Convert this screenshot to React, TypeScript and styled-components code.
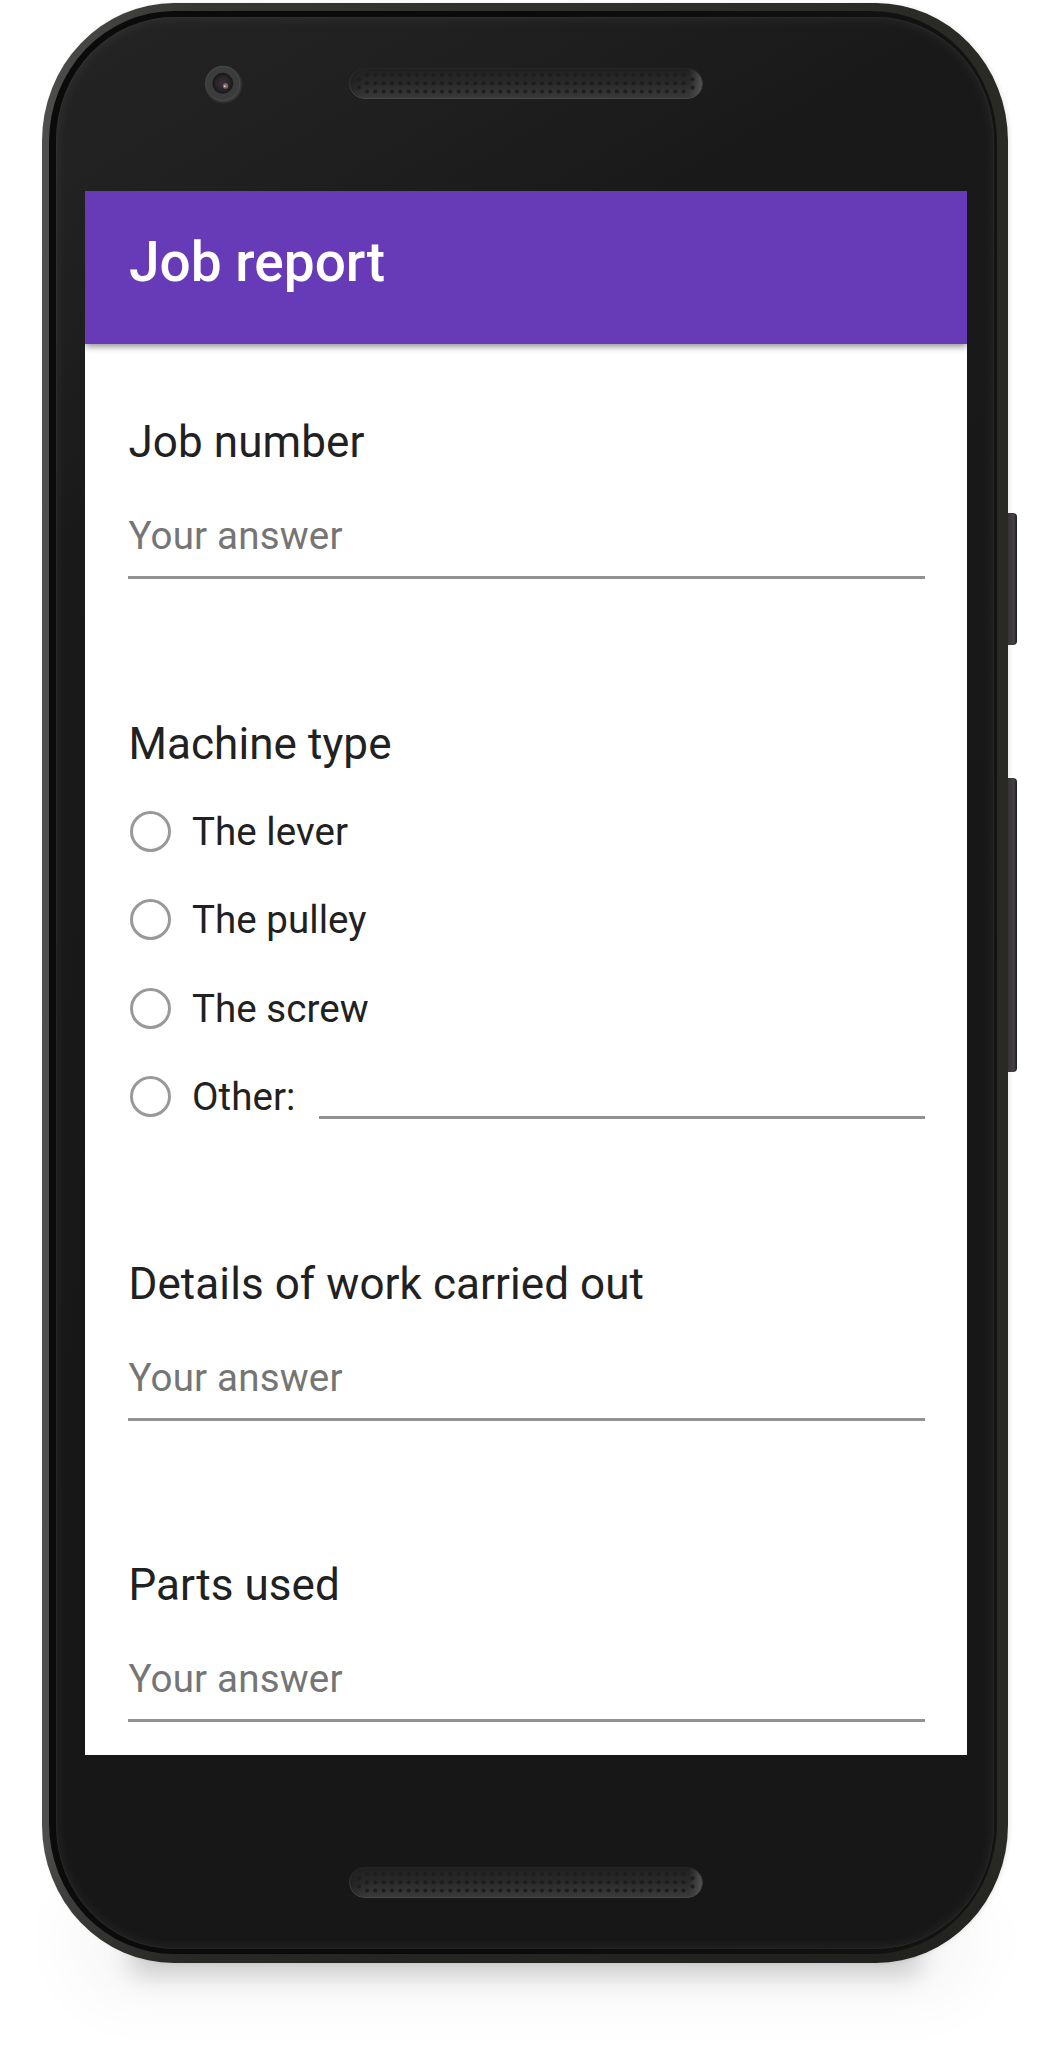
import React from "react";
import styled, { createGlobalStyle } from "styled-components";

const GlobalStyle = createGlobalStyle`
  * { box-sizing: border-box; }
  html, body { margin: 0; background: #fff; }
  body { font-family: Roboto, "Liberation Sans", sans-serif; color: #212121; }
`;

const Stage = styled.main`
  width: 1053px;
  height: 2061px;
  padding: 3px 0 0 42px;
  overflow: hidden;
  background: #fff;
`;

const Device = styled.div`
  position: relative;
  width: 966px;
  height: 1960px;
  &::before {
    content: "";
    position: absolute;
    left: 85px;
    right: 85px;
    bottom: -14px;
    height: 40px;
    border-radius: 30px;
    background: rgba(0, 0, 0, 0.17);
    filter: blur(12px);
  }
  &::after {
    content: "";
    position: absolute;
    left: 20px;
    right: 20px;
    bottom: -48px;
    height: 140px;
    border-radius: 80px;
    background: rgba(0, 0, 0, 0.025);
    filter: blur(22px);
  }
`;

const Frame = styled.div`
  position: relative;
  z-index: 1;
  width: 966px;
  height: 1960px;
  padding: 14px;
  border-radius: 132px / 138px;
  background:
    linear-gradient(180deg, transparent 94%, rgba(20, 20, 18, 0.45) 100%),
    linear-gradient(90deg, #4e4f4d 0, #464744 4%, #363733 16%, #2e2f2b 60%, #292a26 100%);
  box-shadow: 2px 0 4px rgba(0, 0, 0, 0.08);
  &::before {
    content: "";
    position: absolute;
    inset: 8px 11px 9px 7px;
    border-radius: 125px / 131px;
    background: linear-gradient(90deg, #0b0b0b 50%, #131312);
  }
`;

const Glass = styled.div`
  position: relative;
  display: flex;
  flex-direction: column;
  align-items: center;
  width: 938px;
  height: 1932px;
  padding-top: 51px;
  border-radius: 118px / 124px;
  background: linear-gradient(150deg, #242424 0, #202020 10%, #191919 22%, #171717 60%);
  box-shadow: inset 0 0 14px rgba(255, 255, 255, 0.08), inset 0 0 2px rgba(255, 255, 255, 0.12);
`;

const SideKey = styled.div<{ $top: number; $height: number }>`
  position: absolute;
  left: 966px;
  top: ${(p) => p.$top}px;
  width: 9px;
  height: ${(p) => p.$height}px;
  border-radius: 0 4px 4px 0;
  background: linear-gradient(90deg, #3a373a, #454145 65%, #1e1b1e);
`;

const SensorRow = styled.div`
  display: grid;
  grid-template-columns: 293px 354px 291px;
  grid-template-rows: 31px;
  align-items: center;
  width: 938px;
  height: 31px;
  margin-bottom: 92px;
`;

const BottomRow = styled(SensorRow)`
  margin: 112px 0 0;
`;

const SpeakerSvg = styled.svg`
  display: block;
  grid-column: 2;
`;

const CameraSvg = styled.svg`
  display: block;
  margin: -5px 0 -5px 147px;
  overflow: visible;
`;

const Screen = styled.section`
  display: flex;
  flex-direction: column;
  flex: none;
  width: 882px;
  height: 1564px;
  margin-left: 2px;
  background: #fff;
  overflow: hidden;
`;

const AppBar = styled.header`
  height: 153px;
  flex: none;
  padding: 39px 43px 0 44px;
  background: #673ab7;
  box-shadow: 0 3px 6px rgba(0, 0, 0, 0.32), 0 1px 9px rgba(0, 0, 0, 0.14);
`;

const Title = styled.h1`
  margin: 0;
  font-size: 55px;
  line-height: 64px;
  font-weight: 500;
  color: #fff;
`;

const Form = styled.form`
  display: flex;
  flex-direction: column;
  padding: 65px 42px 0 43px;
`;

const Question = styled.div<{ $height: number }>`
  flex: none;
  height: ${(p) => p.$height}px;
`;

const Label = styled.h2`
  margin: 0;
  padding-left: 0.5px;
  font-size: 44px;
  line-height: 67px;
  height: 66px;
  font-weight: 400;
  letter-spacing: 0.08px;
`;

const Answer = styled.div`
  height: 104px;
  padding: 35px 0 0 0.5px;
  border-bottom: 3px solid #929292;
  font-size: 38.5px;
  line-height: 51px;
  letter-spacing: 0.18px;
  color: #757575;
`;

const Options = styled.div`
  display: flex;
  flex-direction: column;
  padding-top: 10px;
`;

const Option = styled.label`
  display: flex;
  align-items: center;
  height: 88.5px;
  font-size: 38.5px;
  line-height: 50px;
  letter-spacing: 0.05px;
`;

const OptionText = styled.span`
  padding-top: 1px;
`;

const Radio = styled.span`
  flex: none;
  width: 41px;
  height: 41px;
  margin: 0 21px 0 2px;
  border: 3px solid #999;
  border-radius: 50%;
`;

const OtherLine = styled.span`
  flex: 1;
  height: 45px;
  margin-left: 24px;
  border-bottom: 3px solid #929292;
`;

function Speaker({ id }: { id: string }) {
  const dots: [number, number][] = [];
  for (let i = 0; i < 39; i++) {
    for (let r = 0; r < 3; r++) dots.push([18 + i * 8.33, 7 + r * 8.2]);
  }
  [10, 343.5].forEach((x) => dots.push([x, 11.2], [x, 19.5]));
  return (
    <SpeakerSvg width="354" height="31" viewBox="0 0 354 31">
      <defs>
        <linearGradient id={id + "f"} x1="0" y1="0" x2="0" y2="1">
          <stop offset="0" stopColor="#202020" />
          <stop offset="0.5" stopColor="#2a2a2a" />
          <stop offset="1" stopColor="#3a3a3a" />
        </linearGradient>
        <linearGradient id={id + "e"} x1="0" y1="0" x2="1" y2="0">
          <stop offset="0" stopColor="#111" stopOpacity="0.4" />
          <stop offset="0.05" stopColor="#222" stopOpacity="0" />
          <stop offset="0.96" stopColor="#555" stopOpacity="0" />
          <stop offset="1" stopColor="#666" stopOpacity="0.7" />
        </linearGradient>
        <linearGradient id={id + "s"} x1="0" y1="0" x2="0" y2="1">
          <stop offset="0" stopColor="#252525" />
          <stop offset="1" stopColor="#474747" />
        </linearGradient>
      </defs>
      <rect x="0.5" y="0.5" width="353" height="30" rx="15" fill={`url(#${id}f)`} />
      <rect x="0.5" y="0.5" width="353" height="30" rx="15" fill={`url(#${id}e)`} />
      <rect x="0.5" y="0.5" width="353" height="30" rx="15" fill="none" stroke={`url(#${id}s)`} />
      {dots.map(([x, y], i) => (
        <circle key={i} cx={x} cy={y} r="2" fill="#1e1e1e" />
      ))}
    </SpeakerSvg>
  );
}

function Camera() {
  return (
    <CameraSvg width="40" height="40" viewBox="0 0 40 40">
      <defs>
        <radialGradient id="lens">
          <stop offset="0" stopColor="#3a3238" />
          <stop offset="0.6" stopColor="#2b262b" />
          <stop offset="1" stopColor="#171717" />
        </radialGradient>
        <radialGradient id="halo">
          <stop offset="0.82" stopColor="#3f4141" />
          <stop offset="1" stopColor="#3f4141" stopOpacity="0" />
        </radialGradient>
      </defs>
      <circle cx="20.6" cy="20.6" r="19.5" fill="url(#halo)" />
      <circle cx="19.7" cy="19.3" r="17" fill="#3b3d3d" stroke="#484a4a" strokeWidth="1" />
      <circle cx="19.8" cy="19.3" r="10.5" fill="url(#lens)" />
      <circle cx="22.5" cy="22" r="2.7" fill="#806865" />
      <circle cx="21.8" cy="22.3" r="1" fill="#d9c4bc" />
    </CameraSvg>
  );
}

const machines = ["The lever", "The pulley", "The screw"];

export default function App() {
  return (
    <Stage>
      <GlobalStyle />
      <Device>
        <SideKey $top={510} $height={132} />
        <SideKey $top={775} $height={294} />
        <Frame>
          <Glass>
            <SensorRow>
              <Camera />
              <Speaker id="top" />
            </SensorRow>
            <Screen>
              <AppBar>
                <Title>Job report</Title>
              </AppBar>
              <Form>
                <Question $height={302}>
                  <Label>Job number</Label>
                  <Answer>Your answer</Answer>
                </Question>
                <Question $height={540}>
                  <Label>Machine type</Label>
                  <Options>
                    {machines.map((name) => (
                      <Option key={name}>
                        <Radio />
                        <OptionText>{name}</OptionText>
                      </Option>
                    ))}
                    <Option>
                      <Radio />
                      <OptionText>Other:</OptionText>
                      <OtherLine />
                    </Option>
                  </Options>
                </Question>
                <Question $height={301}>
                  <Label>Details of work carried out</Label>
                  <Answer>Your answer</Answer>
                </Question>
                <Question $height={190}>
                  <Label>Parts used</Label>
                  <Answer>Your answer</Answer>
                </Question>
              </Form>
            </Screen>
            <BottomRow>
              <Speaker id="bottom" />
            </BottomRow>
          </Glass>
        </Frame>
      </Device>
    </Stage>
  );
}
